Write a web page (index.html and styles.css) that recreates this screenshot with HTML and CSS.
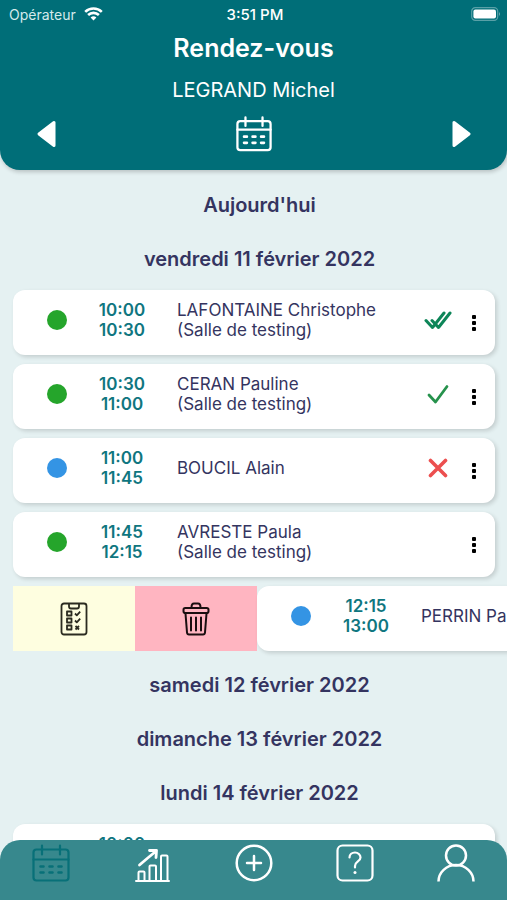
FILE: index.html
```html
<!DOCTYPE html>
<html lang="fr">
  <head>
    <meta charset="UTF-8" />
    <meta name="viewport" content="width=device-width, initial-scale=1.0" />
    <title>Rendez-vous</title>
    <link rel="stylesheet" href="styles.css">
  </head>
  <body>
    <header class="header">
      <div class="status-bar">
        <span class="carrier">
          Opérateur
          <svg width="19" height="14" viewBox="0 0 19 14" fill="none" stroke="#fff" stroke-width="2.6">
            <path d="M1.2 4.9a12 12 0 0 1 16.6 0M4.1 8a7.8 7.8 0 0 1 10.8 0" />
            <path d="M9.5 13.6 6.6 10.6a4.2 4.2 0 0 1 5.8 0z" fill="#fff" stroke="none" />
          </svg>
        </span>
        <span class="clock">3:51 PM</span>
        <svg class="battery" width="30" height="14" viewBox="0 0 30 14">
          <rect x="0.7" y="0.7" width="26" height="12.6" rx="3.6" fill="none" stroke="#fff" stroke-opacity="0.35" stroke-width="1.2" />
          <rect x="2.4" y="2.4" width="22.6" height="9.2" rx="2" fill="#fff" />
          <path d="M28 4.8q1.8 2.2 0 4.4z" fill="#fff" fill-opacity="0.5" />
        </svg>
      </div>
      <h1>Rendez-vous</h1>
      <p class="user">LEGRAND Michel</p>
      <div class="date-nav">
        <button type="button" aria-label="Jour précédent">
          <svg width="20" height="28" viewBox="0 0 20 28" fill="#fff" stroke="#fff" stroke-width="3" stroke-linejoin="round">
            <path d="M18 2.5v23L3 14z" />
          </svg>
        </button>
        <button type="button" aria-label="Calendrier">
          <svg width="36" height="36" viewBox="0 0 38 38" fill="none" stroke="#fff" stroke-width="2.4" stroke-linecap="round">
            <rect x="1.5" y="5.5" width="35" height="30.5" rx="3" />
            <path d="M1.5 14.5h35M10 1.5v9M28 1.5v9" />
            <path d="M8.5 21.8h3M17.5 21.8h3M26.5 21.8h3M8.5 28.3h3M17.5 28.3h3M26.5 28.3h3" stroke-width="2.8" />
          </svg>
        </button>
        <button type="button" aria-label="Jour suivant">
          <svg width="20" height="28" viewBox="0 0 20 28" fill="#fff" stroke="#fff" stroke-width="3" stroke-linejoin="round">
            <path d="M3 2.5v23L18 14z" />
          </svg>
        </button>
      </div>
    </header>

    <main class="agenda">
      <h2>Aujourd'hui</h2>
      <h2>vendredi 11 février 2022</h2>
      <ul class="list">
        <li class="card">
          <span class="dot green"></span>
          <span class="time">10:00<br>10:30</span>
          <span class="name">LAFONTAINE Christophe<br>(Salle de testing)</span>
          <svg class="state" width="28" height="20" viewBox="0 0 28 20" fill="none" stroke="#0d8558" stroke-width="3" stroke-linecap="round" stroke-linejoin="round">
            <path d="M2 10.5 8.5 17.5 20 3M8 10.5 14.5 17.5 26 3" />
          </svg>
          <button type="button" class="more" aria-label="Options"><i></i><i></i><i></i></button>
        </li>
        <li class="card">
          <span class="dot green"></span>
          <span class="time">10:30<br>11:00</span>
          <span class="name">CERAN Pauline<br>(Salle de testing)</span>
          <svg class="state" width="22" height="20" viewBox="0 0 22 20" fill="none" stroke="#26924c" stroke-width="2.8" stroke-linecap="round" stroke-linejoin="round">
            <path d="M2 11 8.5 18 20 2.5" />
          </svg>
          <button type="button" class="more" aria-label="Options"><i></i><i></i><i></i></button>
        </li>
        <li class="card">
          <span class="dot blue"></span>
          <span class="time">11:00<br>11:45</span>
          <span class="name">BOUCIL Alain</span>
          <svg class="state" width="20" height="20" viewBox="0 0 20 20" fill="none" stroke="#ec4f4f" stroke-width="3.6" stroke-linecap="round">
            <path d="M2.5 2.5l15 15M17.5 2.5l-15 15" />
          </svg>
          <button type="button" class="more" aria-label="Options"><i></i><i></i><i></i></button>
        </li>
        <li class="card">
          <span class="dot green"></span>
          <span class="time">11:45<br>12:15</span>
          <span class="name">AVRESTE Paula<br>(Salle de testing)</span>
          <span></span>
          <button type="button" class="more" aria-label="Options"><i></i><i></i><i></i></button>
        </li>
        <li class="swiped">
          <button type="button" class="action edit" aria-label="Questionnaire">
            <svg width="28" height="34" viewBox="0 0 28 34" fill="none" stroke="#2b2b20" stroke-width="1.8" stroke-linejoin="round">
              <rect x="1.5" y="1.5" width="25" height="31" rx="2.5" />
              <path d="M9 1.5v3q0 2 2 2h6q2 0 2-2v-3" />
              <path d="M7 9.5h4.500v4H7zM7 16.5h4.500v4H7zM7 23.5h4.500v4H7z" />
              <path d="M15 11.5l1.800 1.800 3.400-3.600M15 18.5l1.800 1.800 3.400-3.600M15.500 24l3.500 3.500M19 24l-3.500 3.500" />
            </svg>
          </button>
          <button type="button" class="action delete" aria-label="Supprimer">
            <svg width="28" height="34" viewBox="0 0 28 34" fill="none" stroke="#1a0e10" stroke-width="2" stroke-linecap="round" stroke-linejoin="round">
              <rect x="1.5" y="6" width="25" height="5" rx="1.8" />
              <path d="M9.5 5.5Q9.5 1.5 12 1.5h4q2.500 0 2.500 4M3.500 11.5 5 30.5q.2 2 2 2h14q1.800 0 2-2l1.500-19" />
              <path d="M9 15.5v13M14 15.5v13M19 15.5v13" />
            </svg>
          </button>
          <div class="card">
            <span class="dot blue"></span>
            <span class="time">12:15<br>13:00</span>
            <span class="name">PERRIN Paul</span>
          </div>
        </li>
      </ul>
      <h2>samedi 12 février 2022</h2>
      <h2>dimanche 13 février 2022</h2>
      <h2>lundi 14 février 2022</h2>
      <ul class="list">
        <li class="card">
          <span></span>
          <span class="time">10:00<br>10:30</span>
        </li>
      </ul>
    </main>

    <nav class="tabs">
      <a href="#" class="active" aria-label="Rendez-vous">
        <svg width="38" height="38" viewBox="0 0 38 38" fill="none" stroke="currentColor" stroke-width="2.2" stroke-linecap="round">
          <rect x="1.5" y="5.5" width="35" height="31" rx="3" />
          <path d="M1.5 15.5h35M10 1.5v9M28 1.5v9" />
          <path d="M8.5 22.5h3M17.5 22.5h3M26.5 22.5h3M8.5 28.5h3M17.5 28.5h3M26.5 28.5h3" stroke-width="2.6" />
        </svg>
      </a>
      <a href="#" aria-label="Statistiques">
        <svg width="38" height="38" viewBox="0 0 38 38" fill="none" stroke="currentColor" stroke-width="2" stroke-linecap="round" stroke-linejoin="round">
          <path d="M3 37h33M5.500 36.500v-8q0-1 1-1h4q1 0 1 1v8M16.500 36.500v-14q0-1 1-1h4.500q1 0 1 1v14M28 36.500v-24q0-1 1-1h4.500q1 0 1 1v24" />
          <path d="M6.500 21Q14 14.500 22 8M16.500 6.500 23.500 6.500 23 13.500" stroke-width="2.800" />
        </svg>
      </a>
      <a href="#" aria-label="Ajouter">
        <svg width="38" height="38" viewBox="0 0 38 38" fill="none" stroke="currentColor" stroke-width="2.5" stroke-linecap="round">
          <circle cx="19" cy="19" r="17.3" />
          <path d="M19 12v14M12 19h14" />
        </svg>
      </a>
      <a href="#" aria-label="Aide">
        <svg width="38" height="38" viewBox="0 0 38 38" fill="none" stroke="currentColor" stroke-width="2.2" stroke-linecap="round">
          <rect x="1.5" y="1.5" width="35" height="35" rx="5" />
          <path d="M13.5 13.5c0-3 2.500-5 5.500-5s5.500 2.200 5.500 5c0 4-5.500 4-5.500 8.500v1.500" />
          <circle cx="19" cy="28.5" r="1.5" fill="currentColor" stroke="none" />
        </svg>
      </a>
      <a href="#" aria-label="Profil">
        <svg width="38" height="38" viewBox="0 0 38 38" fill="none" stroke="currentColor" stroke-width="2.5">
          <circle cx="19" cy="11.5" r="10" />
          <path d="M1.500 37.500a17.500 16.500 0 0 1 35 0" />
        </svg>
      </a>
    </nav>
  </body>
</html>
```

FILE: styles.css
```css
* {
  box-sizing: border-box;
}
body {
  display: flex;
  flex-direction: column;
  height: 100vh;
  margin: 0;
  overflow: hidden;
  background-color: #e5f1f2;
  color: #343460;
  font-family: Inter, "Liberation Sans", sans-serif;
}
button {
  padding: 0;
  border: none;
  background: none;
  cursor: pointer;
}
svg {
  display: block;
}

/* header */
.header {
  flex: none;
  height: 170px;
  border-radius: 0 0 20px 20px;
  background-color: #006e78;
  box-shadow: 1px 2px 4px rgba(0, 0, 0, 0.2);
  color: white;
  text-align: center;
}
.status-bar {
  display: grid;
  grid-template-columns: 1fr auto 1fr;
  align-items: center;
  height: 28px;
  padding: 0 6px 0 9px;
  font-size: 14px;
}
.carrier {
  display: flex;
  align-items: center;
  gap: 8px;
  color: #d5eaec;
}
.clock {
  font-size: 15px;
  font-weight: 500;
}
.battery {
  justify-self: end;
}
h1 {
  margin: 0;
  font-size: 25px;
  font-weight: 600;
  line-height: 40px;
}
.user {
  margin: 0;
  font-size: 20px;
  line-height: 44px;
}
.date-nav {
  display: flex;
  justify-content: space-between;
  align-items: center;
  height: 44px;
  padding: 0 36px;
}

/* appointments */
.agenda {
  flex: 1;
  min-height: 0;
  padding-top: 8px;
  overflow: hidden;
}
h2 {
  margin: 0;
  padding-left: 12px;
  font-size: 20px;
  font-weight: 600;
  line-height: 54px;
  text-align: center;
}
.list {
  display: flex;
  flex-direction: column;
  gap: 9px;
  margin: 0;
  padding: 4px 12px 7px 13px;
  list-style: none;
}
.card {
  display: grid;
  grid-template-columns: 54px 110px 1fr 30px 42px;
  align-items: center;
  height: 65px;
  padding-bottom: 5px;
  border-radius: 12px;
  background-color: white;
  box-shadow: 2px 2px 4px rgba(0, 0, 0, 0.15);
  font-size: 17px;
  line-height: 20px;
}
.dot {
  justify-self: end;
  width: 20px;
  height: 20px;
  border-radius: 50%;
}
.green {
  background-color: #25a52b;
}
.blue {
  background-color: #3494e4;
}
.time {
  color: #0f7680;
  font-weight: 600;
  text-align: center;
}
.name {
  white-space: nowrap;
}
.state {
  justify-self: center;
}
.more {
  display: flex;
  flex-direction: column;
  align-items: center;
  gap: 2px;
  padding-top: 5px;
}
.more i {
  width: 4px;
  height: 4px;
  border-radius: 1px;
  background-color: black;
}
.swiped {
  display: flex;
}
.swiped .card {
  flex: none;
  width: 100%;
}
.action {
  display: flex;
  flex: none;
  justify-content: center;
  align-items: center;
  width: 122px;
}
.edit {
  background-color: #fefee0;
}
.delete {
  background-color: #ffb5c1;
}

/* bottom tabs */
.tabs {
  position: fixed;
  right: 0;
  bottom: 0;
  left: 0;
  display: flex;
  height: 60px;
  padding-top: 4px;
  border-radius: 20px 20px 0 0;
  background-color: #37888d;
}
.tabs a {
  display: flex;
  flex: 1;
  justify-content: center;
  color: white;
}
.tabs .active {
  color: #087078;
}
```
